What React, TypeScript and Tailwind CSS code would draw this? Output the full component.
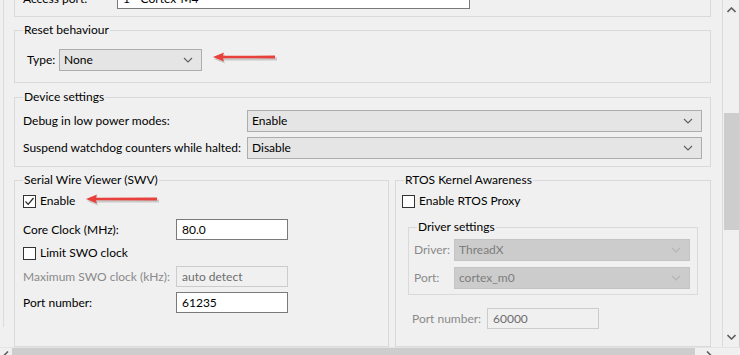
import type { ReactNode } from 'react'

const font = { fontFamily: 'Lato, "Noto Sans", sans-serif' }

function Group({ title, className = '', children }: { title?: string; className?: string; children: ReactNode }) {
  return (
    <fieldset className={`border border-[#d9d9d9] ${className}`}>
      {title && <legend className="ml-[8px] px-[1px] h-4 leading-4 text-[12px] text-black whitespace-nowrap">{title}</legend>}
      {children}
    </fieldset>
  )
}

function Chevron({ light }: { light?: boolean }) {
  return (
    <svg width="10" height="6" viewBox="0 0 10 6" className="shrink-0">
      <polyline points="1,1 5,5 9,1" fill="none" stroke={light ? '#b4b4b4' : '#5f5f5f'} strokeWidth="1.1" />
    </svg>
  )
}

function Combo({ value, className = '', disabled }: { value: string; className?: string; disabled?: boolean }) {
  return (
    <div
      className={`h-[22px] flex items-center justify-between pl-[4px] pr-[8px] border text-[12px] whitespace-nowrap ${
        disabled ? 'bg-[#cccccc] border-[#c4c4c4] text-[#7d7d7d]' : 'bg-[#e5e5e5] border-[#adadad] text-black'
      } ${className}`}
    >
      <span>{value}</span>
      <Chevron light={disabled} />
    </div>
  )
}

function TextBox({ value, disabled, className = 'w-[112px]' }: { value: string; disabled?: boolean; className?: string }) {
  return (
    <div
      className={`h-[21px] flex items-center px-[5px] border text-[12px] whitespace-nowrap ${
        disabled ? 'bg-[#f0f0f0] border-[#cccccc] text-[#6d6d6d]' : 'bg-white border-[#7a7a7a] text-black'
      } ${className}`}
    >
      {value}
    </div>
  )
}

function Check({ checked, label }: { checked?: boolean; label: string }) {
  return (
    <div className="h-4 flex items-center gap-[4px] text-[12px] text-black whitespace-nowrap">
      <div className="w-[13px] h-[13px] bg-white border border-[#333333] flex items-center justify-center">
        {checked && (
          <svg width="11" height="11" viewBox="0 0 11 11">
            <polyline points="1.5,5.5 4.2,8.3 9.5,2" fill="none" stroke="#222" strokeWidth="1.2" />
          </svg>
        )}
      </div>
      <span>{label}</span>
    </div>
  )
}

function RedArrow({ className, width }: { className: string; width: number }) {
  return (
    <svg width={width} height="14" viewBox={`0 0 ${width} 14`} className={`absolute ${className}`}>
      <g transform="translate(1,2)" opacity="0.25">
        <path d={`M0 6 L11 1.5 L10 4.8 L${width - 3} 4.6 L${width - 3} 7.6 L10 7.4 L11 10.5 Z`} fill="#555" />
      </g>
      <path d={`M0 6 L11 1.5 L10 4.8 L${width - 4} 4.6 L${width - 4} 7.4 L10 7.2 L11 10.5 Z`} fill="#e8413c" />
    </svg>
  )
}

function ScrollArrow({ up }: { up?: boolean }) {
  return (
    <svg width="9" height="6" viewBox="0 0 9 6">
      <path d={up ? 'M0.5 5 L4.5 1 L8.5 5' : 'M0.5 1 L4.5 5 L8.5 1'} fill="none" stroke="#606060" strokeWidth="1.6" />
    </svg>
  )
}

export default function App() {
  return (
    <div className="w-[740px] h-[355px] overflow-hidden bg-[#f0f0f0] relative" style={font}>
      <div className="flex h-[347px]">
        {/* scrolled content */}
        <div className="w-[722px] h-full overflow-hidden pl-[3px]">
          <div className="h-full border-l border-[#dcdcdc] pl-[10px] pr-[11px]">
            <div className="-mt-[20px] h-[37px] border border-[#d9d9d9] pt-[7px] pl-[8px] flex items-start text-[12px] whitespace-nowrap">
              <div className="w-[94px] h-[21px] flex items-center">Access port:</div>
              <TextBox value="1 - Cortex-M4" className="w-[353px]" />
            </div>

            <Group title="Reset behaviour" className="mt-[5px]">
              <div className="pt-[11px] pb-[11px] pl-[12px] flex items-center text-[12px]">
                <span className="w-[32px]">Type:</span>
                <Combo value="None" className="w-[143px]" />
              </div>
            </Group>

            <Group title="Device settings" className="mt-[6px]">
              <div className="pt-[5px] pb-[7px] pl-[8px] pr-[8px] flex flex-col gap-[5px] text-[12px] whitespace-nowrap">
                <div className="flex items-center">
                  <span className="w-[224px] shrink-0">Debug in low power modes:</span>
                  <Combo value="Enable" className="flex-1" />
                </div>
                <div className="flex items-center">
                  <span className="w-[224px] shrink-0">Suspend watchdog counters while halted:</span>
                  <Combo value="Disable" className="flex-1" />
                </div>
              </div>
            </Group>

            <div className="mt-[5px] flex gap-[6px] h-[175px] whitespace-nowrap">
              <Group title="Serial Wire Viewer (SWV)" className="w-[375px]">
                <div className="pt-[5px] pl-[8px] text-[12px]">
                  <Check checked label="Enable" />
                  <div className="mt-[10px] flex items-center">
                    <span className="w-[153px] shrink-0">Core Clock (MHz):</span>
                    <TextBox value="80.0" />
                  </div>
                  <div className="mt-[5px]">
                    <Check label="Limit SWO clock" />
                  </div>
                  <div className="mt-[5px] flex items-center">
                    <span className="w-[153px] shrink-0 text-[#8a8a8a]">Maximum SWO clock (kHz):</span>
                    <TextBox value="auto detect" disabled />
                  </div>
                  <div className="mt-[5px] flex items-center">
                    <span className="w-[153px] shrink-0">Port number:</span>
                    <TextBox value="61235" />
                  </div>
                </div>
              </Group>

              <Group title="RTOS Kernel Awareness" className="flex-1">
                <div className="pt-[5px] pl-[6px] text-[12px]">
                  <Check label="Enable RTOS Proxy" />
                  <Group title="Driver settings" className="mt-[10px] ml-[6px] w-[290px]">
                    <div className="pt-[4px] pb-[5px] pl-[5px] flex flex-col gap-[6px] text-[#8a8a8a]">
                      <div className="flex items-center">
                        <span className="w-[40px] shrink-0">Driver:</span>
                        <Combo value="ThreadX" disabled className="w-[236px]" />
                      </div>
                      <div className="flex items-center">
                        <span className="w-[40px] shrink-0">Port:</span>
                        <Combo value="cortex_m0" disabled className="w-[236px]" />
                      </div>
                    </div>
                  </Group>
                  <div className="mt-[13px] ml-[10px] flex items-center">
                    <span className="w-[75px] shrink-0 text-[#8a8a8a]">Port number:</span>
                    <TextBox value="60000" disabled />
                  </div>
                </div>
              </Group>
            </div>
          </div>
        </div>

        {/* vertical scrollbar */}
        <div className="w-[18px] h-full border-l border-[#dcdcdc] border-r border-r-[#d0d0d0] bg-[#f0f0f0] flex flex-col items-center">
          <div className="h-[20px] flex items-center justify-center">
            <ScrollArrow up />
          </div>
          <div className="mt-[93px] w-[15px] h-[117px] bg-[#cdcdcd]" />
          <div className="flex-1" />
          <div className="h-[20px] flex items-center justify-center">
            <ScrollArrow />
          </div>
        </div>
      </div>

      {/* horizontal scrollbar */}
      <div className="h-[17px] flex items-start border-t border-[#e4e4e4]">
        <div className="w-[12px] flex justify-center pt-[3px]">
          <svg width="6" height="9" viewBox="0 0 6 9">
            <path d="M5 0.5 L1 4.5 L5 8.5" fill="none" stroke="#606060" strokeWidth="1.6" />
          </svg>
        </div>
        <div className="w-[683px] h-[15px] bg-[#cdcdcd]" />
        <div className="w-[27px] flex justify-center pt-[3px]">
          <svg width="6" height="9" viewBox="0 0 6 9">
            <path d="M1 0.5 L5 4.5 L1 8.5" fill="none" stroke="#606060" strokeWidth="1.6" />
          </svg>
        </div>
      </div>

      <RedArrow className="left-[213px] top-[51px]" width={66} />
      <RedArrow className="left-[86px] top-[193px]" width={75} />
    </div>
  )
}
